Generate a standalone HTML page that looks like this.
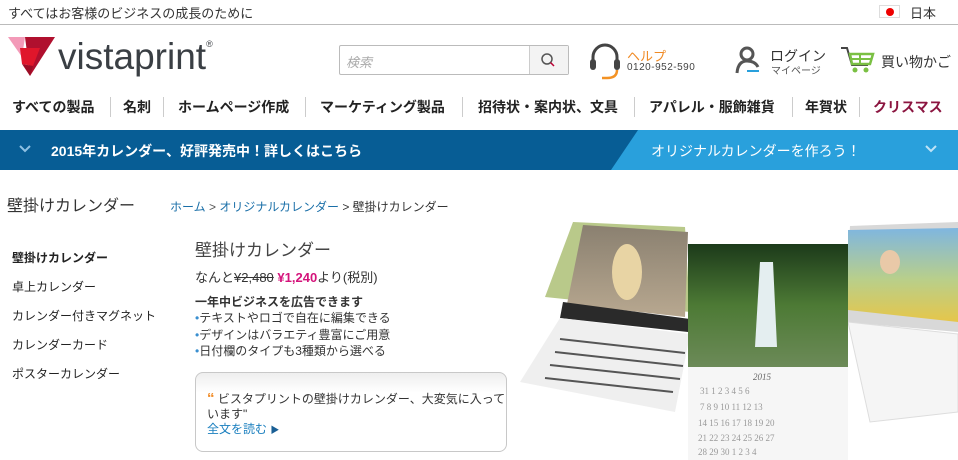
<!DOCTYPE html>
<html><head><meta charset="utf-8"><style>
*{margin:0;padding:0;box-sizing:border-box}
body{width:958px;height:460px;overflow:hidden;background:#fff;font-family:"Liberation Sans","Noto Sans CJK JP",sans-serif;color:#333;position:relative}
.a{position:absolute;white-space:nowrap}
.nav{font-size:14px;font-weight:bold;color:#222;top:97px}
.sep{position:absolute;top:97px;width:1px;height:20px;background:#ccc}
.side{font-size:12px;color:#222;left:12px}
</style></head><body>
<div class="a" style="left:8px;top:3px;font-size:13px;color:#333">すべてはお客様のビジネスの成長のために</div>
<div class="a" style="left:879px;top:5px;width:21px;height:13px;border:1px solid #ddd;background:#fff"><div style="width:8px;height:8px;border-radius:50%;background:#e00;margin:2px auto"></div></div>
<div class="a" style="left:910px;top:3px;font-size:13px;color:#333">日本</div>
<div class="a" style="left:0;top:24px;width:958px;height:1px;background:#bbb"></div>
<svg class="a" style="left:0;top:30px" width="60" height="50">
<polygon points="8,7 25,7 22,27" fill="#f39ab8"/>
<polygon points="25,7 55,7 30,46" fill="#b0102e"/>
<polygon points="20,18 40,18 33,36 22,34" fill="#e0162b"/>
<polygon points="22,34 33,36 30,46" fill="#9c0d25"/>
</svg>
<div class="a" style="left:58px;top:36px;font-size:37px;color:#3a3f44;letter-spacing:0px">vistaprint<sup style="font-size:9px;vertical-align:22px">®</sup></div>
<div class="a" style="left:339px;top:45px;width:230px;height:30px;border:1px solid #bbb;border-radius:2px;background:#fff"></div>
<div class="a" style="left:346px;top:52px;font-size:13px;color:#aaa;font-style:italic">検索</div>
<div class="a" style="left:529px;top:46px;width:39px;height:28px;background:#f3f3f3;border-left:1px solid #ccc"></div>
<svg class="a" style="left:540px;top:52px" width="16" height="16"><circle cx="7" cy="7" r="5" fill="none" stroke="#555" stroke-width="1.5"/><line x1="10.5" y1="10.5" x2="14" y2="14" stroke="#b03" stroke-width="1.5"/></svg>
<svg class="a" style="left:589px;top:43px" width="32" height="38"><path d="M4 20 V14 A12 12 0 0 1 28 14 V20" fill="none" stroke="#444" stroke-width="3"/><rect x="1" y="16" width="6" height="11" rx="3" fill="#444"/><rect x="25" y="16" width="6" height="11" rx="3" fill="#444"/><path d="M28 27 Q28 35 18 35 H13" fill="none" stroke="#f39224" stroke-width="2.5"/></svg>
<div class="a" style="left:627px;top:46px;font-size:13px;color:#f08a24">ヘルプ</div>
<div class="a" style="left:627px;top:62px;font-size:10px;color:#444;letter-spacing:0.5px">0120-952-590</div>
<svg class="a" style="left:735px;top:45px" width="28" height="30"><circle cx="12" cy="9" r="6" fill="none" stroke="#555" stroke-width="3"/><path d="M2 28 Q3 16 12 16 Q20 16 23 22" fill="none" stroke="#555" stroke-width="3"/><line x1="12" y1="26" x2="24" y2="26" stroke="#29a0dc" stroke-width="2"/></svg>
<div class="a" style="left:770px;top:46px;font-size:14px;color:#333">ログイン</div>
<div class="a" style="left:771px;top:62px;font-size:10px;color:#555">マイページ</div>
<svg class="a" style="left:840px;top:45px" width="36" height="30"><path d="M1 3 H7 L12 20 H28" fill="none" stroke="#444" stroke-width="2"/><path d="M10 9 H33 L30 19 H12 Z" fill="#fff" stroke="#7ac043" stroke-width="2.5"/><line x1="20" y1="9" x2="20" y2="19" stroke="#7ac043" stroke-width="2"/><line x1="11" y1="14" x2="31" y2="14" stroke="#7ac043" stroke-width="2"/><circle cx="15" cy="25" r="2.5" fill="#7ac043"/><circle cx="26" cy="25" r="2.5" fill="#7ac043"/></svg>
<div class="a" style="left:881px;top:52px;font-size:14px;color:#333">買い物かご</div>
<div class="a nav" style="left:12px">すべての製品</div><div class="sep" style="left:110px"></div>
<div class="a nav" style="left:123px">名刺</div><div class="sep" style="left:163px"></div>
<div class="a nav" style="left:178px">ホームページ作成</div><div class="sep" style="left:305px"></div>
<div class="a nav" style="left:320px">マーケティング製品</div><div class="sep" style="left:462px"></div>
<div class="a nav" style="left:478px">招待状・案内状、文具</div><div class="sep" style="left:634px"></div>
<div class="a nav" style="left:649px">アパレル・服飾雑貨</div><div class="sep" style="left:792px"></div>
<div class="a nav" style="left:805px">年賀状</div><div class="sep" style="left:859px"></div>
<div class="a nav" style="left:873px;color:#8b1540">クリスマス</div>
<svg class="a" style="left:0;top:130px" width="958" height="40"><rect width="958" height="40" fill="#29a0dc"/><polygon points="0,0 638,0 611,40 0,40" fill="#075d95"/>
<polyline points="20,16 25,21 30,16" fill="none" stroke="#8fc1e3" stroke-width="2"/><polyline points="926,16 931,21 936,16" fill="none" stroke="#bfe3f6" stroke-width="2"/></svg>
<div class="a" style="left:51px;top:141px;font-size:14px;font-weight:bold;color:#fff">2015年カレンダー、好評発売中！詳しくはこちら</div>
<div class="a" style="left:651px;top:141px;font-size:14px;color:#fff">オリジナルカレンダーを作ろう！</div>
<div class="a" style="left:7px;top:192px;font-size:16px;color:#333">壁掛けカレンダー</div>
<div class="a" style="left:170px;top:198px;font-size:12px;color:#1a6fa8">ホーム <span style="color:#555">&gt;</span> オリジナルカレンダー <span style="color:#333">&gt; 壁掛けカレンダー</span></div>
<div class="a side" style="top:249px;font-weight:bold">壁掛けカレンダー</div>
<div class="a side" style="top:278px">卓上カレンダー</div>
<div class="a side" style="top:307px">カレンダー付きマグネット</div>
<div class="a side" style="top:336px">カレンダーカード</div>
<div class="a side" style="top:365px">ポスターカレンダー</div>
<div class="a" style="left:195px;top:236px;font-size:17px;color:#444">壁掛けカレンダー</div>
<div class="a" style="left:195px;top:267px;font-size:13px;color:#333">なんと<s>¥2,480</s> <b style="color:#d4147b">¥1,240</b>より(税別)</div>
<div class="a" style="left:195px;top:293px;font-size:12px;font-weight:bold;color:#333">一年中ビジネスを広告できます</div>
<div class="a" style="left:195px;top:310px;font-size:12px;color:#333;line-height:16.5px"><span style="color:#3a8fd0">•</span>テキストやロゴで自在に編集できる<br><span style="color:#3a8fd0">•</span>デザインはバラエティ豊富にご用意<br><span style="color:#3a8fd0">•</span>日付欄のタイプも3種類から選べる</div>
<div class="a" style="left:195px;top:372px;width:312px;height:80px;border:1px solid #c8c8c8;border-radius:8px;background:linear-gradient(#eee,#fff 25%)"></div>
<div class="a" style="left:207px;top:391px;font-size:12px;color:#333;line-height:15px"><b style="color:#f08a24;font-size:15px">“</b> ビスタプリントの壁掛けカレンダー、大変気に入って<br>います"<br><span style="color:#1a7fbf">全文を読む</span> <span style="color:#1a5f95;font-size:9px">▶</span></div>
<svg class="a" style="left:505px;top:222px" width="453" height="238">
<defs><linearGradient id="w" x1="0" y1="0" x2="0" y2="1"><stop offset="0" stop-color="#1c3a1a"/><stop offset=".5" stop-color="#4d7a35"/><stop offset="1" stop-color="#6c8a58"/></linearGradient>
<linearGradient id="k" x1="0" y1="0" x2="0" y2="1"><stop offset="0" stop-color="#7fb6e0"/><stop offset=".55" stop-color="#b9cf8a"/><stop offset="1" stop-color="#e6c64a"/></linearGradient>
<linearGradient id="d" x1="0" y1="0" x2="0" y2="1"><stop offset="0" stop-color="#8a8070"/><stop offset="1" stop-color="#b8a890"/></linearGradient></defs>
<polygon points="68,0 180,5 185,90 40,75" fill="#b9c98a"/>
<polygon points="78,3 183,10 180,95 62,82" fill="url(#d)"/>
<ellipse cx="122" cy="50" rx="15" ry="28" fill="#e8d4a4"/>
<polygon points="58,80 185,97 183,110 55,96" fill="#2a2a2a"/>
<polygon points="55,96 185,112 170,190 15,160" fill="#efefef"/>
<g stroke="#555" stroke-width="2"><line x1="55" y1="117" x2="180" y2="131"/><line x1="50" y1="130" x2="178" y2="144"/><line x1="45" y1="143" x2="175" y2="157"/><line x1="40" y1="156" x2="168" y2="170"/></g>
<polygon points="345,4 453,0 453,110 340,100" fill="#d8d8d8"/>
<polygon points="343,8 453,6 453,100 343,88" fill="url(#k)"/>
<ellipse cx="385" cy="40" rx="10" ry="12" fill="#e9c9a8"/>
<polygon points="343,100 453,112 453,190 365,200" fill="#f5f5f5" stroke="#ddd"/>
<rect x="183" y="22" width="160" height="123" fill="url(#w)"/>
<polygon points="255,40 268,40 272,125 250,125" fill="#e4eef0"/>
<rect x="183" y="145" width="160" height="100" fill="#f6f6f6"/>
<g font-family="Liberation Serif,serif" font-size="9" fill="#999"><text x="248" y="158" fill="#666" font-style="italic">2015</text>
<text x="195" y="172">31 1 2 3 4 5 6</text><text x="195" y="188">7 8 9 10 11 12 13</text><text x="193" y="204">14 15 16 17 18 19 20</text><text x="193" y="219">21 22 23 24 25 26 27</text><text x="193" y="233">28 29 30 1 2 3 4</text></g>
</svg>
</body></html>
